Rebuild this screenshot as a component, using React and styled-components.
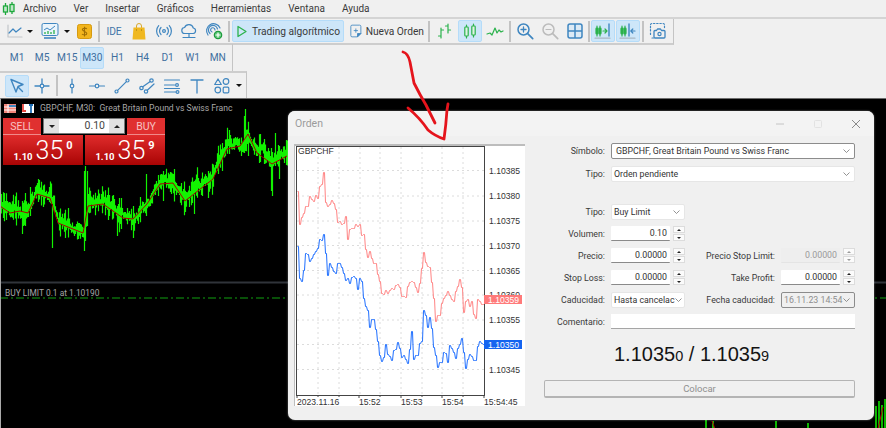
import styled, { createGlobalStyle } from "styled-components";

const BLUE = "#3f86c0";
const GREEN = "#2bb24c";
const UI_FONT = `Roboto, "Liberation Sans", sans-serif`;

const GlobalStyle = createGlobalStyle`
  html, body {
    margin: 0;
    padding: 0;
    background: #f0f0f0;
    overflow: hidden;
  }
  * { box-sizing: border-box; }
`;

const Page = styled.div`
  position: relative;
  width: 886px;
  height: 428px;
  display: flex;
  flex-direction: column;
  overflow: hidden;
  background: #f0f0f0;
  font-family: ${UI_FONT};
  color: #333;
`;

/* ---------- menu + toolbars ---------- */

const MenuBar = styled.div`
  height: 17px;
  display: flex;
  align-items: center;
  flex: none;
`;

const AppLogo = styled.svg`
  width: 14px;
  height: 14px;
  margin: 0 7px 0 2px;
`;

const MenuItem = styled.span`
  font-size: 10px;
  margin-right: 17px;
  color: #3b3b3b;
`;

const ToolRow = styled.div`
  height: 27px;
  flex: none;
  display: flex;
  border-top: 2px solid #d4d4d4;
`;

const Strip = styled.div`
  display: flex;
  align-items: center;
  gap: 1px;
  height: ${({ $h }) => $h || 26}px;
  padding-left: 5px;
  width: ${({ $w }) => $w}px;
  border-right: 1px solid #c4c4c4;
  border-bottom: ${({ $noBottom }) => ($noBottom ? "none" : "2px solid #cdcdcd")};
  border-top: ${({ $lined }) => ($lined ? "2px solid #cdcdcd" : "none")};
`;

const Tool = styled.div`
  width: ${({ $w }) => $w || 24}px;
  height: 22px;
  flex: none;
  display: flex;
  align-items: center;
  justify-content: center;
  gap: 4px;
  margin-left: ${({ $ml }) => $ml || 0}px;
  border-radius: 2px;
  border: 1px solid ${({ $active }) => ($active ? "#b5dcf9" : "transparent")};
  background: ${({ $active }) => ($active ? "#cde6f9" : "transparent")};
  font-size: ${({ $size }) => $size || 10.2}px;
  color: ${({ $color }) => $color || "#3a3a3a"};
  white-space: nowrap;
`;

const Caret = styled.span`
  width: 0;
  height: 0;
  flex: none;
  margin: 0 ${({ $mr }) => $mr ?? 2}px 0 1px;
  border-left: 3px solid transparent;
  border-right: 3px solid transparent;
  border-top: 3px solid #111;
`;

const Sep = styled.span`
  width: 2px;
  height: 21px;
  flex: none;
  margin: 0 ${({ $m }) => $m ?? 1}px;
  background: #c3c3c3;
`;

const Ico = ({ children, sw = 1.2, color = BLUE }) => (
  <svg width="18" height="18" viewBox="0 0 18 18" fill="none" stroke={color} strokeWidth={sw} strokeLinecap="round" strokeLinejoin="round">
    {children}
  </svg>
);

const Candle = ({ x, y = 4, h = 10, color = GREEN, w = 3 }) => (
  <g stroke={color}>
    <path d={`M${x} ${y - 2}V${y + h + 2}`} />
    <rect x={x - w / 2} y={y} width={w} height={h} rx="0.8" fill={w < 3 ? color : "#dff3e4"} />
  </g>
);

const SplitIcon = ({ back }) => (
  <Ico>
    <Candle x={3} y={6} h={6} w={2} />
    <Candle x={6} y={6} h={6} w={2} />
    {back ? (
      <>
        <path d="M10 2v12" strokeWidth="1.4" />
        <path d="M16 9h-4M13.8 7l-2 2 2 2" />
      </>
    ) : (
      <>
        <path d="M15 2v12" strokeWidth="1.4" />
        <path d="M9 9h4M11 7l2 2-2 2" stroke={GREEN} />
      </>
    )}
    <path d="M1 16.2h15" stroke="#a9b7c2" />
  </Ico>
);

function MainToolbar() {
  return (
    <ToolRow>
      <Strip $w={674}>
        <Tool $w={20}>
          <Ico>
            <path d="M2 3v12h14" stroke="#c2c6ca" />
            <path d="M3 11l4-4 3 3 5-4" />
          </Ico>
        </Tool>
        <Caret $mr={4} />
        <Tool>
          <svg width="18" height="18" viewBox="0 0 18 18" fill="none">
            <rect x="1" y="1.5" width="16" height="12" rx="1.5" fill="#eaf4fb" stroke={BLUE} />
            <path d="M3 8l3-2 3 2 5-4" stroke={BLUE} />
            <path d="M4 12V10M7 12V9M10 12V10M13 12V8" stroke={GREEN} strokeWidth="1.3" />
            <path d="M3 16h12" stroke={BLUE} strokeWidth="1.6" />
          </svg>
        </Tool>
        <Caret $mr={1} />
        <Tool>
          <svg width="15" height="15" viewBox="0 0 15 15">
            <rect x="0.5" y="0.5" width="14" height="14" rx="2" fill="#f2b51d" stroke="#d69a10" />
            <path d="M9.8 5C9 3.8 5.4 3.8 5.4 5.6S9.8 7.4 9.8 9.4 6 11.2 5 10M7.5 2.8v9.6" stroke="#a06f05" fill="none" strokeWidth="1.1" />
          </svg>
        </Tool>
        <Sep />
        <Tool $color="#3f74a8">IDE</Tool>
        <Tool>
          <svg width="14" height="17" viewBox="0 0 14 17" fill="none">
            <path d="M4.5 5V3a2.5 2.5 0 0 1 5 0v2" stroke="#d8a92c" />
            <path d="M1.5 4.5h11l1 12H.5z" fill="#f0b820" />
            <path d="M4.5 6.5v1M9.5 6.5v1" stroke="#9a7208" />
          </svg>
        </Tool>
        <Tool>
          <Ico>
            <circle cx="9" cy="9" r="1.4" />
            <path d="M6 5.5a5 5 0 0 0 0 7M12 5.5a5 5 0 0 1 0 7M3.7 3.6a8 8 0 0 0 0 10.8M14.3 3.6a8 8 0 0 1 0 10.8" />
          </Ico>
        </Tool>
        <Tool>
          <Ico>
            <path d="M5 11.5a3 3 0 0 1-.4-6A4.6 4.6 0 0 1 13.3 6a2.8 2.8 0 0 1 0 5.5z" />
            <path d="M9 11.5V15M3 15.5h12" />
          </Ico>
        </Tool>
        <Tool>
          <Ico>
            <path d="M3 13A7 7 0 1 1 15 6M5 11.5A4.6 4.6 0 1 1 12.5 7M7 10a2.2 2.2 0 1 1 3-2" />
            <circle cx="13" cy="13" r="3.7" fill="#5cc777" stroke="#1c9a3c" />
            <path d="M13 11v4M11 13h4" stroke="#fff" />
          </Ico>
        </Tool>
        <Sep />
        <Tool $w={112} $active>
          <svg width="12" height="13" viewBox="0 0 12 13" fill="none">
            <path d="M2 1.5l8 5-8 5z" stroke={GREEN} strokeWidth="1.3" strokeLinejoin="round" />
          </svg>
          Trading algorítmico
        </Tool>
        <Tool $w={76} $ml={4}>
          <svg width="14" height="16" viewBox="0 0 14 16" fill="none">
            <path d="M1 2.5A1.5 1.5 0 0 1 2.5 1h9A1.5 1.5 0 0 1 13 2.5V11l-4 4H2.5A1.5 1.5 0 0 1 1 13.5z" stroke={BLUE} />
            <path d="M7 5v5M4.5 7.5h5" stroke={BLUE} />
            <path d="M9 15v-4h4z" fill={BLUE} stroke={BLUE} />
          </svg>
          Nueva Orden
        </Tool>
        <Sep $m={2} />
        <Tool>
          <Ico color={GREEN}>
            <path d="M5 16V6M2.5 14H5M5 8h2.5M12 11V2M9.5 4H12M12 8h2.5" />
          </Ico>
        </Tool>
        <Tool $active>
          <Ico>
            <Candle x={5.5} y={5} h={9} w={3.4} />
            <Candle x={12.5} y={4} h={9} w={3.4} />
          </Ico>
        </Tool>
        <Tool>
          <Ico color={GREEN}>
            <path d="M1 12l3-1 2 2 3-7 2 5 2-3 2 2 2-1" />
          </Ico>
        </Tool>
        <Sep />
        <Tool>
          <Ico>
            <circle cx="7.5" cy="7.5" r="5.5" strokeWidth="1.5" />
            <path d="M7.5 5v5M5 7.5h5" strokeWidth="1.3" />
            <path d="M11.7 11.7l5 5" strokeWidth="1.7" />
          </Ico>
        </Tool>
        <Tool>
          <Ico color="#bcbcbc">
            <circle cx="7.5" cy="7.5" r="5.5" strokeWidth="1.5" />
            <path d="M5 7.5h5" />
            <path d="M11.7 11.7l5 5" strokeWidth="1.7" />
          </Ico>
        </Tool>
        <Tool>
          <svg width="16" height="16" viewBox="0 0 16 16" fill="#dceaf5" stroke={BLUE} strokeWidth="1.5">
            <rect x="1" y="1" width="14" height="14" rx="2" />
            <path d="M8 1v14M1 8h14" />
          </svg>
        </Tool>
        <Sep $m={0} />
        <Tool $active><SplitIcon /></Tool>
        <Tool $active><SplitIcon back /></Tool>
        <Sep />
        <Tool>
          <Ico>
            <path d="M1.5 9V3a1.5 1.5 0 0 1 1.5-1.5h11A1.5 1.5 0 0 1 15.5 3v4" strokeDasharray="1.4 1.8" />
            <path d="M1.5 11v3M3 16h1.5" strokeDasharray="1.4 1.8" />
            <path d="M6 8.5h1.5l1-1.5h3l1 1.5h2.500a1 1 0 0 1 1 1V15a1 1 0 0 1-1 1H6a1 1 0 0 1-1-1V9.5a1 1 0 0 1 1-1z" strokeWidth="1.3" />
            <circle cx="10.5" cy="12" r="1.6" />
          </Ico>
        </Tool>
      </Strip>
    </ToolRow>
  );
}

const TIMEFRAMES = ["M1", "M5", "M15", "M30", "H1", "H4", "D1", "W1", "MN"];

const RowLine = styled.div`
  height: 27px;
  flex: none;
  display: flex;
`;

function TimeframeBar() {
  return (
    <RowLine>
      <Strip $w={233} $h={27} $noBottom>
        {TIMEFRAMES.map((t) => (
          <Tool key={t} $w={24.1} $active={t === "M30"} $color="#3f6f9f">{t}</Tool>
        ))}
      </Strip>
    </RowLine>
  );
}

function DrawingBar() {
  return (
    <RowLine>
      <Strip $w={247} $h={27} $noBottom $lined>
        <Tool $active>
          <Ico>
            <path d="M3 2.5l12 5-5 2-2 5.5z" fill="#dbeaf6" strokeWidth="1.4" />
            <path d="M10.5 10.5l4 4" strokeWidth="1.4" />
          </Ico>
        </Tool>
        <Tool>
          <Ico>
            <path d="M9 2v5M9 11v5M2 9h5M11 9h5" strokeWidth="1.3" />
            <circle cx="9" cy="9" r="1.8" />
          </Ico>
        </Tool>
        <Sep />
        <Tool>
          <Ico>
            <path d="M9 2v5M9 11v5" />
            <circle cx="9" cy="9" r="1.8" />
          </Ico>
        </Tool>
        <Tool>
          <Ico>
            <path d="M1.5 9H7M11 9h5.5" />
            <circle cx="9" cy="9" r="1.8" />
          </Ico>
        </Tool>
        <Tool>
          <Ico>
            <circle cx="3.5" cy="14.5" r="1.5" />
            <circle cx="14.5" cy="3.5" r="1.5" />
            <path d="M4.6 13.4l8.8-8.8" />
          </Ico>
        </Tool>
        <Tool>
          <Ico>
            <circle cx="3.5" cy="11" r="1.7" />
            <circle cx="8" cy="14.5" r="1.7" />
            <circle cx="13.5" cy="3.5" r="1.7" />
            <path d="M4.8 9.8l7.4-5.200M9.3 13.3l6.7-6.300" />
          </Ico>
        </Tool>
        <Tool>
          <Ico>
            <path d="M1.5 3h15M1.5 8h10M1.5 11.500h15M1.5 15h11" />
            <circle cx="14" cy="8" r="1.4" />
            <circle cx="14.5" cy="15" r="1.4" />
          </Ico>
        </Tool>
        <Tool>
          <Ico sw={1.3}>
            <path d="M3 3h12M9 3v13" />
          </Ico>
        </Tool>
        <Tool>
          <Ico>
            <path d="M5 2l3.3 5.5H1.7z" />
            <circle cx="13" cy="4.5" r="2.8" />
            <circle cx="4.8" cy="13" r="2.8" />
            <rect x="10.2" y="10.2" width="5.6" height="5.6" rx="1" />
          </Ico>
        </Tool>
        <Caret />
      </Strip>
    </RowLine>
  );
}

/* ---------- main chart data ---------- */

function seeded(seed) {
  let s = seed;
  return () => {
    s = (s * 16807) % 2147483647;
    return s / 2147483647;
  };
}

function lerp(points, x) {
  for (let i = 1; i < points.length; i++) {
    if (x <= points[i][0]) {
      const [x0, y0] = points[i - 1];
      const [x1, y1] = points[i];
      return y0 + ((y1 - y0) * (x - x0)) / (x1 - x0 || 1);
    }
  }
  return points[points.length - 1][1];
}

const MA_LINE = [[0, 205], [10, 212], [20, 210], [28, 212], [37, 193], [50, 197], [58, 222], [83, 232], [88, 205], [103, 203], [123, 217], [133, 218], [147, 203], [160, 183], [173, 182], [185, 200], [213, 178], [227, 148], [240, 145], [248, 133], [257, 152], [272, 163], [287, 155]];

const SPIKES = [[30, 186, 215], [22, 200, 233], [52, 205, 247], [84, 170, 250], [85, 165, 240], [87, 170, 225], [117, 205, 235], [133, 205, 237], [146, 173, 215], [163, 170, 200], [194, 185, 213], [208, 170, 197], [222, 142, 170], [245, 108, 150], [244, 115, 145], [248, 130, 155], [272, 160, 195], [271, 165, 190], [275, 132, 165], [279, 145, 178]];

function buildGreenBars() {
  const rnd = seeded(4711);
  let d = "";
  let drift = 0;
  for (let x = 0; x < 288; x += 1) {
    drift = drift * 0.8 + (rnd() - 0.5) * 6;
    const mid = lerp(MA_LINE, x) - 2 + drift;
    const half = 3 + rnd() * rnd() * 15;
    d += `M${x + 0.5} ${(mid - half).toFixed(1)}V${(mid + half).toFixed(1)}`;
  }
  SPIKES.forEach(([x, a, b]) => {
    d += `M${x + 0.5} ${a}V${b}`;
  });
  return d;
}

const GREEN_BARS = buildGreenBars();
const MA_PATH = "M" + MA_LINE.map((p) => p.join(" ")).join("L");

const ChartArea = styled.div`
  position: relative;
  flex: 1;
  background: #000;
  border-top: 1px solid #6d6d6d;
  border-left: 1px solid #aaa;
  overflow: hidden;
`;

const ChartCanvas = styled.svg`
  display: block;
  width: 886px;
  height: 331px;
`;

const ChartTitle = styled.div`
  position: absolute;
  left: 3px;
  top: 4px;
  display: flex;
  align-items: center;
  gap: 6px;
  font-size: 8.6px;
  color: #a8a8a8;
  white-space: pre;
`;

const QuickTrade = styled.div`
  position: absolute;
  left: 2px;
  top: 19px;
  width: 162px;
  display: flex;
  flex-direction: column;
`;

const QuickRow = styled.div`
  display: flex;
  justify-content: space-between;
  height: ${({ $h }) => $h}px;
`;

const SideButton = styled.div`
  width: 38px;
  display: flex;
  align-items: center;
  justify-content: center;
  font-size: 10.5px;
  color: #f7c2c2;
  background: #e03030;
  border-bottom: 1px solid #f08a8a;
`;

const VolumeBox = styled.div`
  width: 82px;
  height: 16px;
  display: flex;
  background: #fff;
  border: 1px solid #777;
  font-size: 10.5px;
  color: #444;
`;

const VolumeArrow = styled.span`
  width: 15px;
  flex: none;
  background: #e2e2e2;
  display: flex;
  align-items: center;
  justify-content: center;
  &::after {
    content: "";
    border-left: 3px solid transparent;
    border-right: 3px solid transparent;
    ${({ $up }) => ($up ? "border-bottom: 3px solid #222;" : "border-top: 3px solid #222;")}
  }
`;

const VolumeValue = styled.span`
  flex: 1;
  text-align: right;
  padding-right: 4px;
  line-height: 14px;
`;

const PriceBox = styled.div`
  width: 80px;
  display: flex;
  align-items: flex-start;
  justify-content: center;
  background: linear-gradient(#e02c2c, #a90404);
  color: #fff;
  line-height: 1;
`;

const PriceSmall = styled.span`
  font-size: 9.5px;
  font-weight: 700;
  margin: 17px 3px 0 0;
`;

const PriceBig = styled.span`
  font-size: 25px;
  margin-top: 3px;
  font-family: Roboto, sans-serif;
  font-weight: 300;
`;

const PriceTiny = styled.span`
  font-size: 11px;
  font-weight: 700;
  margin: 5px 0 0 3px;
`;

const OrderLabel = styled.div`
  position: absolute;
  left: 4px;
  top: 189px;
  font-size: 8.4px;
  color: #a5a5a5;
`;

function MainChart() {
  return (
    <ChartCanvas viewBox="1 98 886 331">
      <path d={GREEN_BARS} stroke="#12f200" strokeWidth="1.2" fill="none" />
      <path d={MA_PATH} stroke="#a80000" strokeWidth="1" fill="none" />
      <path d="M0 281.5H886" stroke="#30343a" strokeWidth="2" />
      <path d="M0 297H886" stroke="#11a011" strokeDasharray="8 3 2 3" />
      <path d="M706 416V428M713 420V428M776 420V428M808 422V428M876 405V428M879 400V428M882 404V428M885 398V428" stroke="#12f200" strokeWidth="1.5" />
      <path d="M712 420l3 8M878 428l5-22" stroke="#b00000" />
    </ChartCanvas>
  );
}

/* ---------- order dialog ---------- */

const Dialog = styled.div`
  position: absolute;
  left: 287px;
  top: 12px;
  width: 586px;
  height: 309px;
  background: #f0f0f0;
  border-radius: 7px;
  box-shadow: 0 0 2px rgba(255, 255, 255, 0.5);
  display: flex;
  flex-direction: column;
`;

const TitleBar = styled.div`
  height: 25px;
  flex: none;
  display: flex;
  align-items: center;
  padding: 0 13px 0 7px;
  color: #9b9b9b;
  font-size: 10.5px;
  background: #f3f3f3;
  border-radius: 7px 7px 0 0;
`;

const TitleText = styled.span`
  flex: 1;
`;

const WindowControls = styled.div`
  display: flex;
  align-items: center;
  gap: 28px;
`;

const DialogBody = styled.div`
  display: flex;
  padding: 8px 0 0 6px;
`;

const ChartPanel = styled.div`
  width: 231px;
  height: 262px;
  flex: none;
  background: #fff;
  border-top: 2px solid #bdbdbd;
  border-left: 1px solid #bdbdbd;
`;

const ChartSvg = styled.svg`
  display: block;
  width: 230px;
  height: 260px;
`;

const Form = styled.div`
  margin: -1px 0 0 5px;
  display: grid;
  grid-template-columns: 75px 74px 84px 74px;
  grid-template-rows: 16px 15px 9px repeat(6, 15px) auto auto;
  column-gap: 6px;
  row-gap: 7px;
  align-items: center;
  align-content: start;
  font-size: 8.8px;
`;

const Label = styled.label`
  text-align: right;
  color: #3a3a3a;
  white-space: nowrap;
  justify-self: end;
`;

const SelectBox = styled.div`
  grid-column: ${({ $span }) => ($span ? `span ${$span}` : "auto")};
  height: 16px;
  display: flex;
  align-items: center;
  justify-content: space-between;
  padding: 0 4px 0 ${({ $plain }) => ($plain ? 2 : 4)}px;
  background: ${({ $disabled }) => ($disabled ? "#f0f0f0" : "#fff")};
  border: 1px solid ${({ $border }) => ($border ? "#8c8c8c" : "#e6e6e6")};
  border-radius: 2px;
  color: ${({ $disabled }) => ($disabled ? "#8e8e8e" : "#333")};
  white-space: nowrap;
  overflow: hidden;
`;

const Chevron = () => (
  <svg width="7" height="4" viewBox="0 0 7 4" fill="none" stroke="#777" strokeWidth="0.8" style={{ flex: "none" }}>
    <path d="M0.5 0.5L3.5 3.5L6.5 0.5" />
  </svg>
);

const NumberWrap = styled.div`
  display: flex;
  justify-content: space-between;
  height: 15px;
`;

const NumberInput = styled.div`
  width: 59px;
  height: 15px;
  text-align: right;
  padding-right: 3px;
  line-height: 14px;
  background: ${({ $disabled }) => ($disabled ? "#eeeeee" : "#fff")};
  color: ${({ $disabled }) => ($disabled ? "#9a9a9a" : "#333")};
  border-bottom: 1px solid ${({ $disabled }) => ($disabled ? "#e4e4e4" : "#8a8a8a")};
  border-radius: 1px;
`;

const Spinner = styled.div`
  width: 12px;
  display: flex;
  flex-direction: column;
  gap: 1px;
`;

const SpinButton = styled.span`
  flex: 1;
  background: #fbfbfb;
  border: 1px solid #dcdcdc;
  display: flex;
  align-items: center;
  justify-content: center;
  &::after {
    content: "";
    border-left: 2.5px solid transparent;
    border-right: 2.5px solid transparent;
    ${({ $up, $disabled }) => {
      const c = $disabled ? "#9a9a9a" : "#222";
      return $up ? `border-bottom: 2.5px solid ${c};` : `border-top: 2.5px solid ${c};`;
    }}
  }
`;

const Spacer = styled.div`
  grid-column: 1 / -1;
`;

const Blank = styled.div`
  grid-column: span 2;
`;

const CommentInput = styled.div`
  grid-column: span 3;
  height: 15px;
  background: #fff;
  border-bottom: 1px solid #a5a5a5;
`;

const Quote = styled.div`
  grid-column: 1 / -1;
  height: 27px;
  margin-top: 5px;
  padding-left: 84px;
  font-family: "Liberation Sans", sans-serif;
  font-size: 20px;
  line-height: 27px;
  color: #141414;
  white-space: pre;
`;

const QuoteDigit = styled.span`
  font-size: 14.5px;
`;

const SubmitButton = styled.div`
  grid-column: 1 / -1;
  height: 18px;
  margin: 5px 0 0 14px;
  display: flex;
  align-items: center;
  justify-content: center;
  color: #8f8f8f;
  font-size: 9.5px;
  background: #f0f0f0;
  border: 1px solid #b4b4b4;
  border-bottom-width: 2px;
  border-radius: 2px;
`;

const RED_LINE = [[297, 195], [299, 218], [305, 205], [310, 195], [315, 198], [320, 185], [323, 175], [324, 192], [328, 213], [332, 191], [335, 212], [340, 222], [345, 220], [347, 233], [355, 220], [358, 222], [363, 235], [367, 252], [370, 248], [373, 265], [375, 265], [382, 293], [388, 290], [397, 280], [403, 300], [412, 275], [417, 293], [422, 255], [428, 262], [432, 290], [435, 318], [442, 303], [448, 290], [453, 302], [460, 275], [463, 310], [468, 298], [475, 313], [478, 295], [484, 302]];

const BLUE_LINE = [[297, 250], [300, 283], [305, 255], [311, 258], [318, 240], [323, 235], [327, 278], [328, 260], [335, 268], [340, 265], [345, 283], [353, 275], [357, 283], [361, 278], [363, 293], [367, 312], [370, 327], [373, 315], [378, 350], [382, 357], [385, 342], [390, 358], [397, 340], [403, 358], [407, 363], [411, 330], [413, 357], [422, 340], [423, 305], [427, 328], [430, 318], [433, 347], [438, 368], [442, 353], [447, 358], [447, 335], [455, 352], [461, 335], [465, 362], [470, 347], [475, 362], [478, 340], [484, 347]];

function jitter(points, seed) {
  const rnd = seeded(seed);
  const out = [];
  for (let x = points[0][0]; x <= 483; x += 2) {
    const y = Math.round(lerp(points, x) + (rnd() - 0.5) * 10) + 0.5;
    out.push(`${x + 0.5} ${y}`, `${x + 1.5} ${y}`);
  }
  return "M" + out.join("L");
}

const RED_PATH = jitter(RED_LINE, 91);
const BLUE_PATH = jitter(BLUE_LINE, 357);

const GRID_X = [318, 339, 360, 380, 401, 422, 442, 463];
const PRICES = [["1.10385", 169.5], ["1.10380", 195], ["1.10375", 220], ["1.10370", 244.5], ["1.10365", 269.5], ["1.10360", 294], ["1.10355", 319], ["1.10350", 343.5], ["1.10345", 368.5]];
const TIMES = [["2023.11.16", 297], ["15:52", 359], ["15:53", 401], ["15:54", 442], ["15:54:45", 484]];

function OrderChart() {
  const textStyle = { fontFamily: `"Liberation Sans", sans-serif`, fontSize: 8.6, fill: "#333" };
  return (
    <ChartSvg viewBox="295 145 230 260">
      {GRID_X.map((x) => (
        <path key={x} d={`M${x} 146V393`} stroke="#dcdcdc" strokeDasharray="2 3" />
      ))}
      {PRICES.map(([p, y]) => (
        <path key={p} d={`M297 ${y}H484`} stroke="#dcdcdc" strokeDasharray="2 3" />
      ))}
      <path d={RED_PATH} stroke="#ff8484" fill="none" />
      <path d={BLUE_PATH} stroke="#1f6fff" fill="none" />
      <rect x="296.5" y="145.5" width="188" height="249" fill="none" stroke="#444" />
      {TIMES.map(([t, x]) => (
        <g key={t}>
          <path d={`M${x} 394v3`} stroke="#444" />
          <text x={x} y="404" style={textStyle}>{t}</text>
        </g>
      ))}
      <path d="M318 394v2M339 394v2M380 394v2M422 394v2M463 394v2" stroke="#444" />
      {PRICES.map(([p, y]) => (
        <text key={p} x="489" y={y + 3} style={textStyle}>{p}</text>
      ))}
      <text x="298" y="153" style={textStyle}>GBPCHF</text>
      <rect x="484" y="294" width="38" height="9" fill="#ff7a7a" />
      <text x="488" y="302" style={{ ...textStyle, fill: "#fff" }}>1.10359</text>
      <rect x="484" y="339" width="38" height="9" fill="#1464f0" />
      <text x="488" y="347" style={{ ...textStyle, fill: "#fff" }}>1.10350</text>
    </ChartSvg>
  );
}

function NumberField({ value, disabled }) {
  return (
    <NumberWrap>
      <NumberInput $disabled={disabled}>{value}</NumberInput>
      <Spinner>
        <SpinButton $up $disabled={disabled} />
        <SpinButton $disabled={disabled} />
      </Spinner>
    </NumberWrap>
  );
}

function OrderDialog() {
  return (
    <Dialog>
      <TitleBar>
        <TitleText>Orden</TitleText>
        <WindowControls>
          <svg width="10" height="10" viewBox="0 0 10 10" stroke="#c4c4c4"><path d="M1 5h8" /></svg>
          <svg width="10" height="10" viewBox="0 0 10 10" stroke="#e2e2e2" fill="none"><rect x="1.5" y="1.5" width="7" height="7" rx="1" /></svg>
          <svg width="10" height="10" viewBox="0 0 10 10" stroke="#8a8a8a"><path d="M1 1l8 8M9 1l-8 8" /></svg>
        </WindowControls>
      </TitleBar>
      <DialogBody>
        <ChartPanel>
          <OrderChart />
        </ChartPanel>
        <Form>
          <Label>Símbolo:</Label>
          <SelectBox $span={3} $border>GBPCHF, Great Britain Pound vs Swiss Franc<Chevron /></SelectBox>
          <Label>Tipo:</Label>
          <SelectBox $span={3} $plain>Orden pendiente<Chevron /></SelectBox>
          <Spacer />
          <Label>Tipo:</Label>
          <SelectBox $plain>Buy Limit<Chevron /></SelectBox>
          <Blank />
          <Label>Volumen:</Label>
          <NumberField value="0.10" />
          <Blank />
          <Label>Precio:</Label>
          <NumberField value="0.00000" />
          <Label>Precio Stop Limit:</Label>
          <NumberField value="0.00000" disabled />
          <Label>Stop Loss:</Label>
          <NumberField value="0.00000" />
          <Label>Take Profit:</Label>
          <NumberField value="0.00000" />
          <Label>Caducidad:</Label>
          <SelectBox $plain>Hasta cancelac<Chevron /></SelectBox>
          <Label>Fecha caducidad:</Label>
          <SelectBox $border $disabled $plain>16.11.23 14:54<Chevron /></SelectBox>
          <Label>Comentario:</Label>
          <CommentInput />
          <Quote>1.1035<QuoteDigit>0</QuoteDigit> / 1.1035<QuoteDigit>9</QuoteDigit></Quote>
          <SubmitButton>Colocar</SubmitButton>
        </Form>
      </DialogBody>
    </Dialog>
  );
}

const ArrowMark = styled.svg`
  position: absolute;
  left: 395px;
  top: 45px;
  pointer-events: none;
`;

export default function App() {
  return (
    <Page>
      <GlobalStyle />
      <MenuBar>
        <AppLogo viewBox="0 0 14 14" fill="none" stroke="#1ea83c" strokeWidth="1.3">
          <path d="M3.5 1v12M10 0v12" />
          <rect x="1.5" y="4" width="4" height="6" fill="#bfe8c8" />
          <rect x="8" y="2.5" width="4" height="7" fill="#bfe8c8" />
        </AppLogo>
        <MenuItem>Archivo</MenuItem>
        <MenuItem>Ver</MenuItem>
        <MenuItem>Insertar</MenuItem>
        <MenuItem>Gráficos</MenuItem>
        <MenuItem>Herramientas</MenuItem>
        <MenuItem>Ventana</MenuItem>
        <MenuItem>Ayuda</MenuItem>
      </MenuBar>
      <MainToolbar />
      <TimeframeBar />
      <DrawingBar />
      <ChartArea>
        <MainChart />
        <ChartTitle>
          <svg width="12" height="9" viewBox="0 0 12 9">
            <rect width="12" height="9" fill="#f2857a" />
            <path d="M4 0v9M0 3h12M0 6h12" stroke="#fff" />
            <rect x="5" y="1" width="7" height="2" fill="#3f86c0" />
          </svg>
          <svg width="12" height="9" viewBox="0 0 12 9">
            <rect width="12" height="9" fill="#fff" />
            <path d="M1 0v7h3" stroke="#e8453c" strokeWidth="1.8" fill="none" />
            <path d="M7 1h4M9 1v8" stroke="#1f6fb5" strokeWidth="1.8" fill="none" />
          </svg>
          {"GBPCHF, M30:  Great Britain Pound vs Swiss Franc"}
        </ChartTitle>
        <QuickTrade>
          <QuickRow $h={17}>
            <SideButton>SELL</SideButton>
            <VolumeBox>
              <VolumeArrow />
              <VolumeValue>0.10</VolumeValue>
              <VolumeArrow $up />
            </VolumeBox>
            <SideButton>BUY</SideButton>
          </QuickRow>
          <QuickRow $h={30}>
            <PriceBox>
              <PriceSmall>1.10</PriceSmall>
              <PriceBig>35</PriceBig>
              <PriceTiny>0</PriceTiny>
            </PriceBox>
            <PriceBox>
              <PriceSmall>1.10</PriceSmall>
              <PriceBig>35</PriceBig>
              <PriceTiny>9</PriceTiny>
            </PriceBox>
          </QuickRow>
        </QuickTrade>
        <OrderLabel>BUY LIMIT 0.1 at 1.10190</OrderLabel>
        <OrderDialog />
      </ChartArea>
      <ArrowMark width="60" height="100" viewBox="395 45 60 100" fill="none" stroke="#e5141c" strokeWidth="2.8" strokeLinecap="round" strokeLinejoin="round">
        <path d="M403 52Q408 53 410 62L414 83Q420 95 426 105L435 123" />
        <path d="M408 108Q420 118 428 130Q435 136 444 139Q446 125 447 110L448 104" />
      </ArrowMark>
    </Page>
  );
}
